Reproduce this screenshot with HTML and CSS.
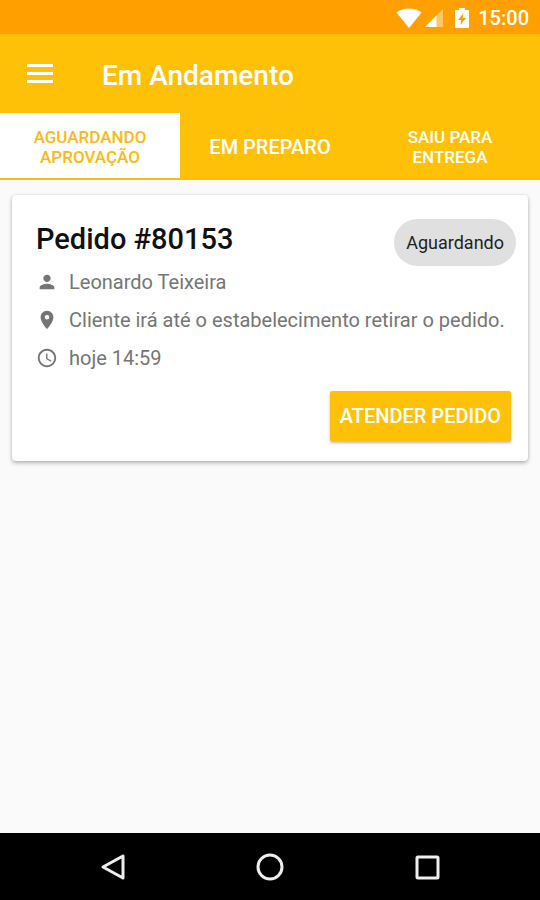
FILE: index.html
```html
<!DOCTYPE html>
<html lang="pt-BR">
<head>
<meta charset="utf-8">
<meta name="viewport" content="width=device-width, initial-scale=1">
<title>Em Andamento</title>
<link rel="stylesheet" href="styles.css">
</head>
<body>
<div class="status-bar">
  <svg class="wifi" viewBox="0 0 26 20" aria-hidden="true"><path d="M13 20 0.5 4.6C4 1.8 8.300 0.500 13 0.500s9 1.300 12.500 4.100z"/></svg>
  <svg class="signal" viewBox="0 0 20 20" aria-hidden="true"><path opacity=".4" d="M19 1v18H1z"/><path d="M12.500 7.500V19H1z"/></svg>
  <svg class="battery" viewBox="0 0 14 22" aria-hidden="true"><path fill-rule="evenodd" d="M4 1h6v2h3q1 0 1 1v16q0 1-1 1H1q-1 0-1-1V4q0-1 1-1h3zM8.500 6 3 13h3.200L5.500 18 11 11H7.800z"/></svg>
  <time class="clock">15:00</time>
</div>
<header class="app-bar">
  <button class="menu" type="button" aria-label="Menu"><svg viewBox="0 0 28 20" aria-hidden="true"><path d="M1 0h26v3H1zM1 8h26v3H1zM1 16h26v3H1z"/></svg></button>
  <h1>Em Andamento</h1>
</header>
<nav class="tabs">
  <button class="tab active" type="button">AGUARDANDO<br>APROVAÇÃO</button>
  <button class="tab single" type="button">EM PREPARO</button>
  <button class="tab" type="button">SAIU PARA<br>ENTREGA</button>
</nav>
<main>
  <article class="card">
    <div class="card-head">
      <h2>Pedido #80153</h2>
      <span class="chip">Aguardando</span>
    </div>
    <ul class="details">
      <li><svg viewBox="0 0 24 24" aria-hidden="true"><path d="M12 12c2.200 0 4-1.800 4-4s-1.800-4-4-4-4 1.800-4 4 1.800 4 4 4zm0 2c-2.700 0-8 1.300-8 4v2h16v-2c0-2.700-5.300-4-8-4z"/></svg>Leonardo Teixeira</li>
      <li><svg viewBox="0 0 24 24" aria-hidden="true"><path fill-rule="evenodd" d="M12 2C8.130 2 5 5.130 5 9c0 5.250 7 13 7 13s7-7.750 7-13c0-3.870-3.130-7-7-7zm0 9.500a2.500 2.500 0 1 1 0-5 2.500 2.500 0 0 1 0 5z"/></svg>Cliente irá até o estabelecimento retirar o pedido.</li>
      <li><svg viewBox="0 0 24 24" aria-hidden="true"><path d="M11.990 2C6.470 2 2 6.480 2 12s4.470 10 9.990 10C17.520 22 22 17.520 22 12S17.520 2 11.990 2zM12 20c-4.420 0-8-3.580-8-8s3.580-8 8-8 8 3.580 8 8-3.580 8-8 8zm.5-13H11v6l5.250 3.150.75-1.230-4.500-2.670z"/></svg>hoje 14:59</li>
    </ul>
    <div class="actions"><button class="primary" type="button">ATENDER PEDIDO</button></div>
  </article>
</main>
<footer class="system-nav">
  <button type="button" aria-label="Voltar"><svg viewBox="0 0 28 28" aria-hidden="true"><path d="M24 3v22L4 14z"/></svg></button>
  <button type="button" aria-label="Início"><svg viewBox="0 0 28 28" aria-hidden="true"><circle cx="14" cy="14" r="12"/></svg></button>
  <button type="button" aria-label="Recentes"><svg viewBox="0 0 28 28" aria-hidden="true"><rect x="4" y="4" width="21" height="21" rx="1"/></svg></button>
</footer>
</body>
</html>
```
FILE: styles.css
```css
* { box-sizing: border-box; }
body {
  margin: 0;
  min-height: 100vh;
  display: flex;
  flex-direction: column;
  background: #fafafa;
  font-family: Roboto, "Liberation Sans", sans-serif;
}
button {
  margin: 0;
  padding: 0;
  border: 0;
  background: none;
  color: inherit;
  font: inherit;
}
svg { display: block; flex: none; fill: currentColor; }
h1, h2 { margin: 0; font-weight: 500; }

.status-bar {
  display: flex;
  align-items: center;
  justify-content: flex-end;
  height: 34px;
  padding: 2px 11px 0;
  background: #ffa000;
  color: #fff;
}
.wifi { width: 26px; height: 20px; }
.signal { width: 20px; height: 20px; margin-left: 2px; }
.battery { width: 14px; height: 22px; margin-left: 11px; }
.clock { margin-left: 9px; font-size: 20px; font-weight: 500; line-height: 32px; }

.app-bar {
  display: flex;
  align-items: center;
  gap: 48px;
  height: 79px;
  padding: 0 26px;
  background: #ffc107;
  color: #fff;
}
.menu svg { width: 28px; height: 20px; }
.app-bar h1 { font-size: 28px; line-height: 32px; padding-top: 4px; }

.tabs {
  display: grid;
  grid-template-columns: repeat(3, 1fr);
  height: 67px;
  background: #ffc107;
  color: #fff;
}
.tab {
  padding-top: 2px;
  border-bottom: 2px solid #ffc107;
  font-size: 17px;
  font-weight: 500;
  line-height: 20px;
  text-align: center;
}
.tab.single { font-size: 20px; }
.tab.active { background: #fff; color: #fbb917; border-color: #fbb917; }

main { flex: 1; padding: 15px 12px; }
.card {
  padding: 24px 17px 20px 24px;
  border-radius: 4px;
  background: #fff;
  box-shadow: 0 2px 4px rgba(0, 0, 0, .28), 0 0 2px rgba(0, 0, 0, .12);
}
.card-head {
  display: flex;
  justify-content: space-between;
  align-items: flex-start;
  height: 44px;
  margin-right: -5px;
}
.card h2 { color: #111; font-size: 29px; line-height: 40px; }
.chip {
  padding: 0 12px;
  border-radius: 24px;
  background: #e0e0e0;
  color: #222;
  font-size: 18px;
  line-height: 47px;
}
.details {
  margin: 0;
  padding: 0;
  list-style: none;
  color: #757575;
  font-size: 20px;
  line-height: 38px;
}
.details li { display: flex; align-items: center; gap: 11px; }
.details svg { width: 22px; height: 22px; }
.actions { display: flex; justify-content: flex-end; margin-top: 14px; }
.primary {
  padding: 0 10px;
  border-radius: 2px;
  background: #ffc107;
  box-shadow: 0 2px 3px rgba(0, 0, 0, .28);
  color: #fff;
  font-size: 20px;
  font-weight: 500;
  line-height: 50px;
}

.system-nav {
  display: grid;
  grid-template-columns: repeat(3, 1fr);
  height: 67px;
  padding: 0 35px;
  background: #000;
  color: #eee;
}
.system-nav button { display: grid; place-items: center; }
.system-nav svg {
  width: 28px;
  height: 28px;
  fill: none;
  stroke: currentColor;
  stroke-width: 3;
  stroke-linejoin: round;
}
```
